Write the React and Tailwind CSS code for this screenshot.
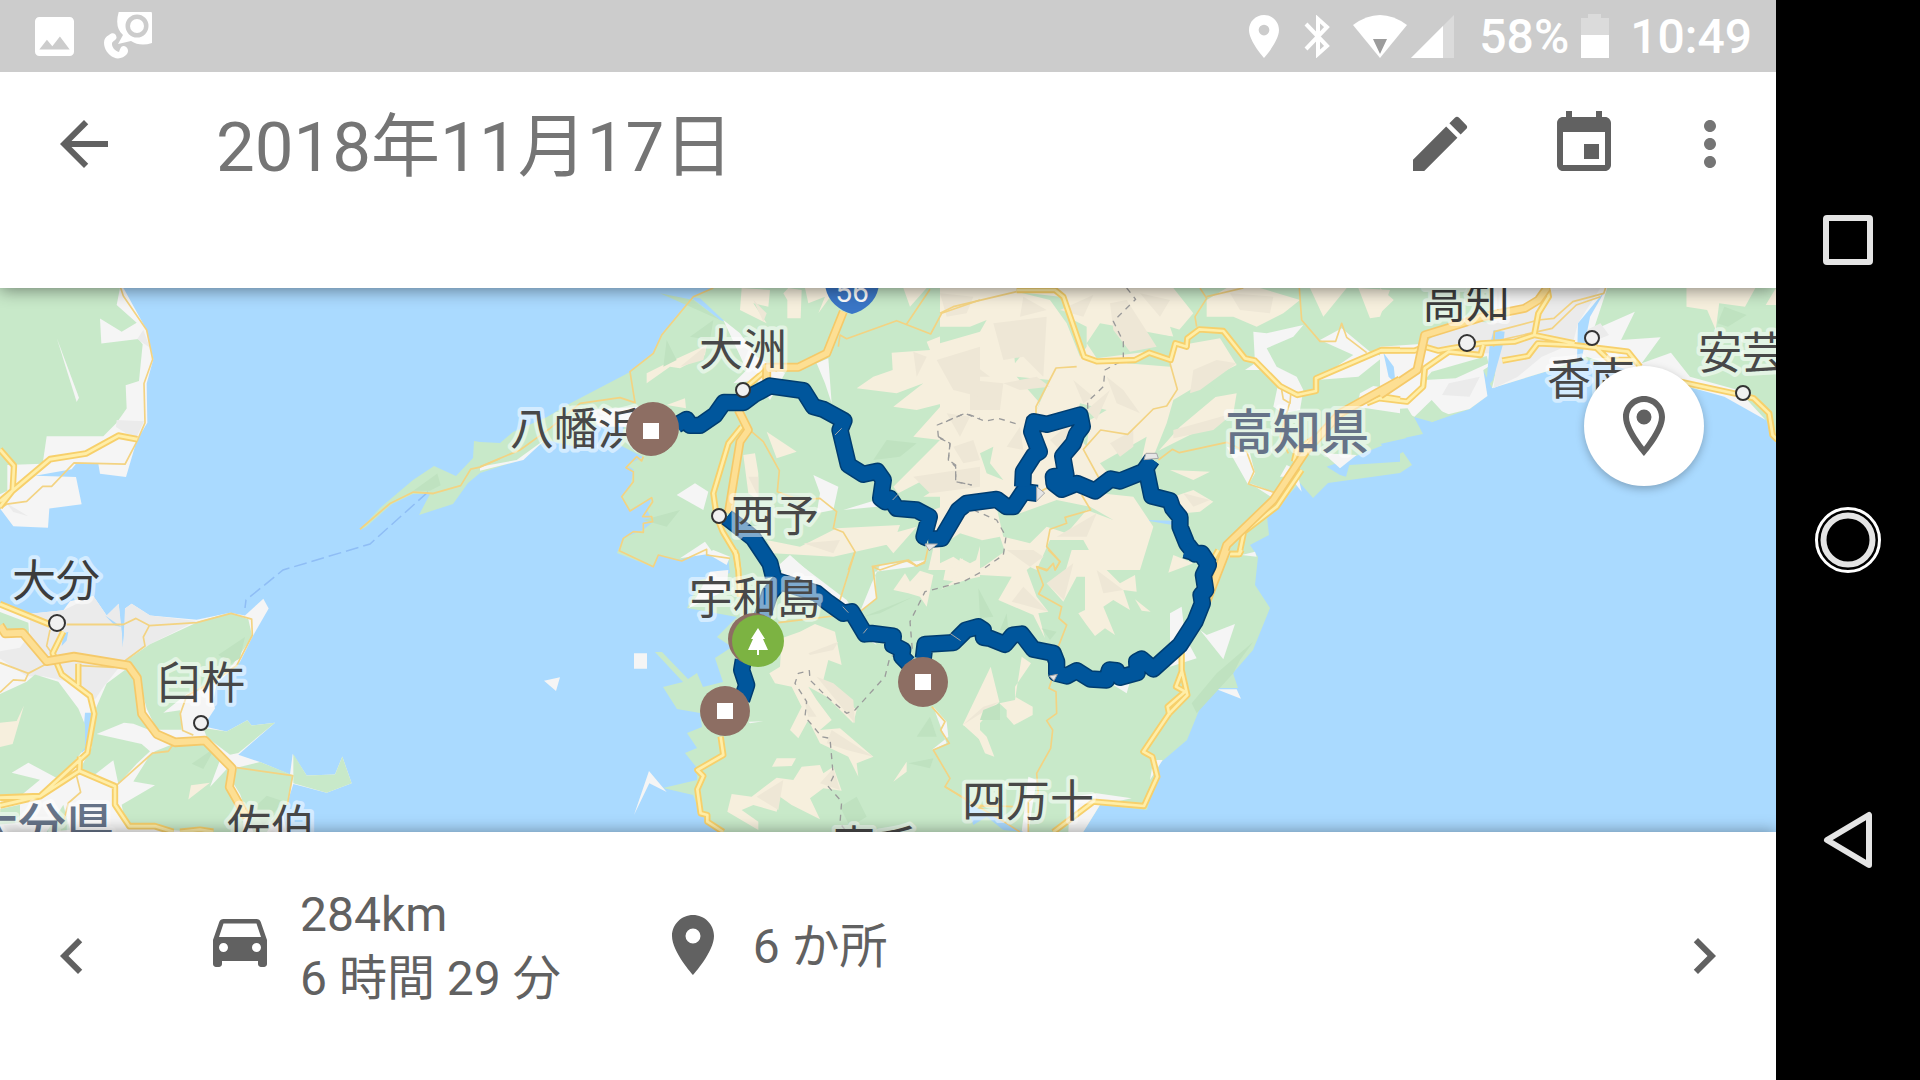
import React from "react";

/* Each map tile has its own local units; paths below are listed per tile. */
const TILES = {
  west: "translate(0 280) scale(.33333 .357)",
  north: "translate(480 280) scale(.33333)",
  south: "translate(480 550) scale(.33333)",
  centre: "translate(940 280) scale(.33333)",
  cape: "translate(940 550) scale(.33333)",
  east: "translate(1380 280) scale(.34436 .33333)",
};

const SHIKOKU =
  "M713 288L693 297L662 335L653 353L630 372L567 405L547 417L513 432L500 443L480 442L474 441L473 458L456 476L434 466L413 480L380 508L360 530L366 527L392 504L413 494L430 494L419 515L453 504L468 483L480 473L517 461L547 440L572 446L610 440L643 457L627 465L634 470L630 487L622 497L630 510L652 498L647 510L653 522L643 530L623 538L617 553L653 567L658 555L680 560L707 550L728 557L730 573L700 580L687 608L737 617L717 637L732 647L715 658L723 682L703 687L697 673L688 679L662 652L655 652L683 682L663 687L677 709L700 713L702 727L687 733L697 748L685 753L697 768L697 780L663 788L693 795L700 813L723 832L1083 832L1100 805L1147 810L1160 763L1187 740L1202 703L1217 688L1238 688L1233 673L1253 650L1270 608L1255 585L1258 557L1250 545L1269 535L1267 517L1300 483L1313 498L1328 483L1400 473L1412 465L1403 452L1392 458L1380 443L1423 434L1414 417L1432 422L1470 409L1487 396L1483 370L1492 388L1545 372L1600 362L1638 370L1686 387L1742 399L1766 420L1776 440V288Z";

const LAND = [
  ["west", "#f5f5f5", "M0 22H370L440 140L460 222L440 290L442 400L410 450L378 552L300 543L295 515H228L215 530L105 548L228 552L245 628L148 640L144 694L40 690L0 640Z"],
  ["west", "#f5f5f5", "M0 905L90 935L190 925L210 900L280 885L320 940L356 907L362 970L368 1030L375 970V920L395 907L450 940L590 952L690 932L735 940L790 893L806 920L757 1000L720 1070L650 1130L640 1180L645 1200L610 1250L680 1265L742 1233L755 1248L825 1240L715 1330L780 1350L870 1385L878 1328L920 1388L1005 1385L1027 1335L1055 1410L980 1436L880 1412L850 1500L860 1546H0Z"],
  ["west", "#c8e9c9", "M0 22H360L350 70L410 120L365 145L300 108L304 178L415 165L428 180L417 283L377 295L380 360L350 400L310 438H140L128 515L22 518V590L0 600Z"],
  ["west", "#ebebeb", "M350 392L432 396L410 440L380 430L348 412ZM412 165L430 140L450 190ZM90 935L190 925L280 885L320 940L356 907L370 1020L375 920L395 907L450 940L590 955L450 1020L370 1070L310 1140L285 1175L230 1130L130 1110L80 1110L0 1060V1040L60 1030L90 990ZM20 625L85 662L40 650Z"],
  ["west", "#aadaff", "M315 940L365 972L345 968ZM365 970H372L368 1030ZM190 990L205 985L200 1010L185 1025ZM255 1212H275L262 1310L245 1325Z"],
  ["west", "#c8e9c9", "M375 1068L450 1020L600 955L690 932L745 950L757 1000L700 1075L650 1125L560 1160L490 1212L540 1205L545 1260L470 1260L440 1200L410 1100ZM0 930L85 960L88 1000L0 985ZM105 1105L175 1125L235 1200L255 1245V1310L180 1400L85 1352L35 1380L120 1400L60 1446L0 1443V1160L80 1125ZM390 1082L420 1110L430 1220L475 1270L400 1243L372 1240L290 1272L425 1300L450 1320L410 1355L355 1412L340 1345L285 1385L240 1370L275 1310L285 1205L320 1130ZM465 1320L520 1300L610 1300L660 1345L630 1420L690 1360V1430L730 1500V1546H600L500 1540L375 1520L365 1470L465 1415L400 1405L450 1330ZM610 1255L680 1265L742 1233L755 1248L825 1240L715 1325L690 1330L620 1280ZM710 1366L780 1350L880 1388L862 1470L800 1546H760L720 1440L700 1410ZM880 1328L920 1388L1005 1385L1027 1335L1055 1410L980 1436L880 1410ZM140 1546L190 1470L210 1540ZM0 1482L60 1470V1520L0 1525Z"],
  ["west", "#bfe2c0", "M655 1050L735 1000L720 1060L690 1075ZM575 1355L645 1310L610 1370ZM760 1480L800 1445L850 1460L790 1530Z"],
  ["west", "#f6efdd", "M0 1240L50 1235L72 1192L38 1300L0 1308ZM573 1415L630 1408L565 1455Z"],
  ["west", "#f5f5f5", "M170 162L237 330L230 342Z"],
  ["west", "#bfe2c0", "M1240 590L1312 542L1322 575L1290 590Z"],
  ["south", "#f5f5f5", "M192 392L240 382L228 423ZM462 310H501V356H462ZM462 795L507 663L560 726L508 700Z"],
  ["north", "#aadaff", "M630 50L660 55L735 125L720 120ZM300 500L370 410L440 400L420 500Z"],
  ["centre", "#aadaff", "M1160 560L1200 585L1218 590L1228 555L1380 545V480L1325 497L1250 527ZM610 720L700 722L715 738ZM1335 220L1380 250V300L1355 270Z"],
  ["east", "#f5f5f5", "M330 24H660L620 150L740 95L700 180L815 172L760 250L845 218L900 290L1040 330L1120 420L1000 350L720 270L600 230L480 275L325 325L345 240L300 270L312 348L260 387L190 405L150 360L100 410L0 360V200L150 190L320 180Z"],
  ["east", "#ebebeb", "M130 190L210 120L350 130L500 30L640 24L575 130L560 190L470 230L400 290L330 325L340 220L180 220ZM600 150L640 130L665 165L630 180ZM200 310L290 290L260 350L180 345Z"],
  ["east", "#c8e9c9", "M150 275L310 228L315 250L220 295L130 300ZM0 390L80 385L95 410L75 475L0 492ZM135 375L205 405L150 427Z"],
  ["east", "#aadaff", "M10 218L40 260L45 310L25 290ZM330 150L362 155L358 190L328 300L308 325L318 200ZM575 130L655 30L610 110L585 240H572ZM590 240L650 245L640 270L500 280Z"],
  ["cape", "#f5f5f5", "M905 15L945 5L950 20ZM830 418H890L903 446ZM690 190L725 170L735 260L770 325L690 350ZM780 240L800 255L885 222L850 328ZM390 740L470 730L575 745L480 765L430 846H385ZM265 680L290 690L265 846H245ZM640 630H668L630 690ZM520 405L570 395L560 430Z"],
  ["cape", "#aadaff", "M75 755L220 830L250 846L190 840L140 800L100 825Z"],
  ["centre", "#f5f5f5", "M940 155L980 160L1090 135L1060 170L980 205L1010 260L1070 290L1090 330L1080 390L1030 400L1000 380L1015 310L960 270L915 270L945 250ZM1140 180L1205 145L1290 215L1330 230L1255 290L1130 300L1240 225ZM1260 340L1300 318L1380 330V400L1250 380ZM1150 520L1250 525L1200 565ZM860 500L930 520L945 580L925 615ZM930 610L1010 640L1000 655ZM1070 570L1085 635L1050 590L1020 590L1040 555Z"],
  ["north", "#f5f5f5", "M730 120L780 160L830 230L915 280L870 360L830 300L760 310L800 270ZM1010 250L1045 235L1055 370L1035 310ZM590 645L645 610L685 635L670 690ZM1000 585L1075 620L1060 690L1010 700L1020 640ZM1090 690L1220 650L1190 680ZM320 390L480 380L440 440L360 440ZM0 560L110 540L200 475L130 540L0 572ZM600 835L675 785L700 820ZM880 870L930 825L980 870Z"],
  ["south", "#f5f5f5", "M890 90L930 20L1100 150L1190 285L1150 260L1060 170ZM625 175L740 120L745 60L690 65L650 140ZM1140 185L1175 100L1200 45L1340 30L1300 50L1185 65L1190 145ZM1360 470L1400 515L1405 560L1355 600L1400 580ZM805 515L850 514L810 520ZM700 0L750 20L740 45L680 10Z"],
];

const TERRAIN = [
  ["north", "#f6efdd", "M785 24L870 30L865 80L820 70L860 130L780 90ZM925 24L965 30L962 115H922V60L910 40ZM975 24H1070L1015 100L1035 50L985 70ZM1270 24H1340L1290 80ZM500 280L560 250L680 195L675 225L600 265L570 260L500 310ZM560 375L615 355L618 385ZM790 525L825 520L835 580V660L805 640ZM860 455L950 515L890 535ZM1500 60L1400 100L1480 130L1340 185L1350 210L1235 218L1238 270L1180 290L1130 325L1250 340L1330 310L1240 380L1310 390L1390 370L1300 470L1380 480L1300 560L1240 620L1255 640L1350 590L1410 600L1330 650L1500 650V870L1390 800L1380 870H1345L1370 760L1330 700L1500 640ZM860 780L960 800L1070 745L1260 735L1240 790L1060 830L880 820ZM1200 770L1310 740L1240 820Z"],
  ["centre", "#f6efdd", "M0 24H700L760 100L700 170L620 160L640 210L840 175L890 255L800 300L720 370L890 340L880 400L700 490L620 530L600 580L480 640L580 650L640 740L600 870H480L430 780L330 780L290 870L200 830L180 770L80 790L60 870H0ZM800 60L860 24H960L1080 60L1030 100L950 140L880 110L800 110ZM1110 24H1220L1150 110ZM1255 24L1350 30L1320 110L1290 115ZM690 570L810 575L760 600ZM700 650L760 630L820 665L780 695L730 700Z"],
  ["centre", "#c8e9c9", "M230 35L360 50L400 120L440 140V200L420 230L380 130L330 60ZM0 140L90 140L140 120L120 155L0 190ZM220 200L290 150L240 230L225 250ZM480 130L620 155L700 170L690 140L770 165L700 190L690 260L560 250L620 215L470 235L440 190ZM420 370L500 390L450 420L440 500L400 450ZM120 520L160 500L150 550L190 600L140 580ZM330 300L230 290L300 370L285 400ZM160 640L240 700L350 660L450 680L520 720L440 690L380 760L320 740L270 790L190 770ZM0 800L60 760L125 780L100 870L40 830L0 850ZM700 360L800 300L840 340L720 440L640 530L680 430ZM480 550L620 470L600 560L520 600Z"],
  ["centre", "#eee7d6", "M160 130L320 110L310 290L250 230L190 240ZM510 70L560 60L650 200L570 215L520 150ZM760 270L830 240L890 250L780 330L750 340ZM700 450L880 400L820 450L700 475ZM90 300L190 310L180 390L90 390ZM360 90L460 45L430 110ZM510 490L580 450V500L540 530ZM350 770L470 700L440 770ZM400 300L460 350L430 370ZM0 40L100 50L80 100L20 110ZM870 40L1000 50L990 100L900 90ZM730 640L810 660L760 680ZM190 310L290 290L330 320L240 330ZM70 230L150 290L50 290ZM440 390L510 330L470 420ZM500 290L550 330L600 400L530 370ZM250 50L320 90L240 110ZM330 480L390 430L370 520ZM200 500L240 440L250 510ZM600 40L690 60L660 110Z"],
  ["north", "#eee7d6", "M600 260L680 195L670 240ZM820 60L860 100L850 125ZM1370 240L1500 200V350L1420 330ZM1300 590L1500 560V620L1350 640ZM970 790L1080 780L1060 820ZM1400 400L1470 410L1440 470ZM805 590L835 590V650ZM1300 215L1340 230L1310 290ZM1420 500L1480 480L1500 540L1450 550Z"],
  ["north", "#bfe2c0", "M550 260L560 180L590 240ZM540 40L640 60L720 120ZM1070 24L1150 60L1120 90L1050 60ZM1180 540L1220 480L1310 490L1260 530ZM490 720L600 690L560 740ZM910 640L990 650L960 720ZM630 170L700 120L690 180Z"],
  ["south", "#f6efdd", "M905 265L960 245L1005 222L1065 245L1085 345L1045 330L1030 390L1130 480L1120 520L1040 440L985 410L1010 450L1055 510L1020 540L1080 535L1180 620L1130 640L1135 680L1105 620L1020 580L985 510L955 565L930 540L965 470L935 410L885 400L868 370L900 350ZM890 625H948L935 648L876 650ZM940 690L965 650L1020 645L1030 670L1060 650L1085 722L1030 715L990 745L1020 808L935 765L900 740L890 785L820 765L785 780L835 815V840L742 785L755 732L815 740L890 683ZM1240 695L1280 635V665ZM1240 120L1275 70L1290 95L1320 62L1360 75L1340 170L1320 140L1285 130ZM1390 90L1400 40L1430 60L1440 24L1470 40L1500 24V80L1430 95ZM1450 525L1500 440V570Z"],
  ["south", "#eee7d6", "M985 310L1075 275L1060 300L990 315ZM1010 380L1060 400L1120 450L1125 520ZM1055 540L1180 620L1100 600L1040 580ZM830 740L910 690L895 780ZM1020 700L1060 655L1080 720ZM960 770L1015 800ZM970 440L1010 500H985Z"],
  ["south", "#bfe2c0", "M1350 500L1370 560L1310 560ZM1285 640L1360 625L1350 655ZM1080 770L1130 740L1160 800L1110 830ZM1150 200L1300 140L1200 190Z"],
  ["cape", "#f6efdd", "M0 120L60 80L130 50L200 0H300L310 20L260 60L290 140L325 185L295 190L315 265L280 195L175 150L215 80L120 75L20 110ZM320 100L370 85L395 0H460L500 60L540 100L585 75L590 125L550 120L570 180L520 150L490 170L525 255L495 235L465 258L440 225L415 190L435 180V80L410 80L370 155ZM685 68L700 15L760 40ZM15 90L20 40L40 60L68 25L75 75ZM245 320L273 340L225 410V440L278 470V495L222 525L200 500V480L178 460L225 450ZM152 350L178 455L110 530L140 560L163 620L135 610L105 540L68 525ZM585 148L632 185L605 182Z"],
  ["cape", "#eee7d6", "M200 0H280L310 20L270 50ZM250 110L325 185L215 155ZM320 100L400 40L372 150ZM470 60L550 120L490 130ZM178 455L68 525L130 470Z"],
  ["cape", "#bfe2c0", "M115 115L160 200L120 205ZM755 460L830 370L940 275L900 330L880 370L770 490ZM180 240L200 190L205 240ZM305 235L350 245L330 270ZM130 480L180 460V510L120 510Z"],
  ["east", "#f6efdd", "M890 24H1090L1060 80L985 70L975 150L950 90L890 80ZM1120 75L1150 24V75ZM0 24L40 60L0 100Z"],
  ["east", "#bfe2c0", "M1000 80L1065 105L1010 140L980 130Z"],
];

const THIN_ROADS = [
  ["west", "M362 22L370 45L440 140L458 222L432 290L435 400L412 450L375 516L222 512L155 578H128L80 620L20 628L0 640M200 965H370L408 948L448 968L590 960L693 934L755 950L757 995L710 1080L640 1125L560 1165L541 1215L548 1262L580 1275M448 968L430 1000L435 1025L370 1070M0 1072L85 1102L75 1122L40 1120L0 1155M150 980L140 1025L155 1045M140 1075L85 1102M240 1080L340 1085L370 1072M350 1415L458 1325L505 1320L520 1300M710 1366L878 1388L862 1470M230 1390L242 1435L205 1465L190 1520M1080 698L1170 626L1240 594L1300 598L1382 576L1412 530L1440 524L1500 500"],
  ["north", "M0 560L120 510L210 445L300 370L420 353L465 368L450 275L520 220L545 165L640 50L700 24M490 530L485 543L470 530L438 563L460 575V605L425 650L450 693L515 653L518 665L488 710H515L518 725L490 730V757L460 755L430 775L418 812L520 860L535 825L605 843L680 808V825L750 835M1075 200L1080 165L1100 176L1250 122L1352 162L1385 100L1500 60M1350 28L1278 135M815 455L850 485L898 572L892 635L960 660L1020 655L1070 695L1060 745L1090 757L1125 815L1105 870M1175 860L1285 840L1310 858L1335 845L1345 800"],
  ["south", "M895 218L1060 198L1140 185L1190 145L1178 50L1200 60L1280 32L1310 48L1335 38M1125 5L1080 150M1355 470L1395 515L1382 540L1408 580L1360 600L1410 685L1395 710L1500 775"],
  ["centre", "M0 100L40 80L230 35M410 260L348 264L288 380V410M690 250L712 328L680 378L640 387L563 463L482 450L430 508L480 600M290 640L320 625L350 625M425 645L452 690L375 712L380 730L330 748L320 800L360 845L345 870M655 540L697 508L718 518L860 487L920 515L942 575L925 612L1005 638M770 140L765 110L800 55L780 24M800 50L910 24M1078 24L1085 120L1140 184H1187L1205 130L1220 172L1280 218M1025 330L1030 358L1050 370L1052 345M1048 372L1020 470L1045 520M290 860L325 870"],
  ["cape", "M325 0L360 35L345 60L340 40L320 62L290 50L310 105L296 132L365 170L357 205L380 225L355 290M335 390L327 415L348 425L350 490L320 512L338 540L332 595L290 670L295 730L265 755V846M15 710L200 820L240 846M100 765L220 770"],
  ["east", "M330 200L332 155L460 120L505 115L560 65L650 40L655 24M350 180L500 145L570 75L640 50"],
];

const MAIN_ROADS = [
  ["west", "M0 475L42 520L38 590L0 635M0 620L150 502L258 486L355 436L412 446M0 908L150 965M190 985L158 1045L185 1105L270 1165L283 1215L262 1325L120 1446L0 1472M235 1075V1135M0 1450L120 1446L238 1375L240 1335M238 1375L345 1418V1470L388 1530H465L520 1546M540 1546L600 1540L640 1546"],
  ["north", "M870 260L800 320L785 350M785 440L745 490L700 640L710 710L728 755L770 825L775 870"],
  ["south", "M765 0L775 60L780 140M722 560L730 615L652 660L670 678L652 718L662 790L682 795V815L730 846"],
  ["centre", "M230 30H345L370 50L432 230L470 244L585 240L628 218L692 240L706 190L740 200L742 175L778 148L850 153L915 235L945 242L1020 318L1072 345L1128 333V295L1325 210H1380M870 822H898L912 755L1010 680L1085 570M1062 545L1070 510L1130 470M1280 370L1330 350L1380 358"],
  ["cape", "M870 12H898L905 0M725 290V360L742 435L688 490L610 605L637 620L652 680L612 768L460 755L340 846M725 365L708 410L735 425L683 470L688 495M835 0L810 45"],
  ["east", "M0 212H100L130 200L170 212L205 205L295 190L390 185L448 165L565 190M0 355L78 365L125 320L130 265L200 215L292 225L300 195M448 165L460 100L490 50L485 24M355 242L430 228L458 190L560 195L720 215L755 260M620 195L665 240H740M870 305L1050 345L1085 355L1130 400L1140 465L1155 480"],
];

const HIGHWAYS = [
  ["west", "M0 968L15 990L68 988L140 1068L222 1055L385 1080L412 1115L425 1215L470 1272L525 1295L615 1290L697 1368L688 1420L740 1505"],
  ["north", "M1090 95L1040 220L955 262H860V310M775 390L805 450L780 485L745 700"],
  ["centre", "M835 870L860 795L1000 660L1100 510L1200 400L1380 300"],
  ["cape", "M860 0L790 180"],
  ["east", "M0 345L108 270L130 165L240 130L300 110L420 85L460 60L485 24"],
];

const BORDERS = [
  ["centre", "M560 24L587 58L520 124L550 185V240L495 270L490 320L443 365V395M18 425L75 400L135 424L175 415L235 433M0 475L30 490L25 540L47 560V605L95 615M100 690L170 720L198 770L190 825L125 870"],
  ["north", "M1375 470L1372 435L1455 400L1500 415M1375 470L1410 490L1405 540L1427 555V605L1475 615"],
  ["south", "M1500 68L1450 95L1335 125L1290 215L1297 300L1230 320L1215 380L1125 480L1100 490L1040 440L990 390L988 362L955 370L945 400L980 455L975 500L1025 560L1050 565L1060 680L1045 710L1085 755L1080 820L1100 846"],
];

const ROUTE = [
  ["north", "M590 435L620 418L630 436L660 436L705 405L732 367L790 368L820 345L870 318L970 332L1000 380L1030 388L1092 422L1080 450L1105 555L1150 583L1192 574L1210 600L1202 655L1215 665L1230 655L1250 685L1310 690L1348 710L1332 770L1345 775M1345 778L1385 775L1435 690L1460 670L1550 658L1580 680L1600 680L1630 635L1672 640"],
  ["centre", "M248 620L250 575L282 525L298 515L275 455L282 425L320 433L420 405L427 440L410 462L400 490L368 528L378 585L340 590L342 610L365 628L410 610L465 633L512 597L540 603L610 575L636 538M620 575L635 648L690 662L698 685L720 712L720 740L740 790L765 822L785 820L808 855"],
  ["cape", "M735 0L785 15L805 45L790 75L797 120L783 135L787 160L765 215L720 285L640 357L605 327L590 335L592 368L540 382L530 362L508 360L500 390L450 387L410 362L380 378L350 370V335L340 310L280 298L245 252L218 255L195 283L150 265L130 262L130 240L115 230L78 240L40 278L-45 283L-50 325"],
  ["south", "M1285 340L1265 320L1268 300L1238 285L1240 258L1175 250L1155 252L1115 185L1090 190L1045 158L1010 130L900 95L870 130L850 190L830 230M790 330L785 360L800 405L785 450"],
  ["north", "M740 712L770 735L820 775L870 850L880 890"],
];

const LABELS = [
  ["大分", 56, 597, "#3c3c3c"],
  ["臼杵", 201, 699, "#484848"],
  ["佐伯", 271, 842, "#484848"],
  ["大洲", 743, 366, "#484848"],
  ["八幡浜", 576, 445, "#484848"],
  ["西予", 775, 532, "#484848"],
  ["宇和島", 755, 614, "#484848"],
  ["四万十", 1028, 817, "#484848"],
  ["高知", 1466, 318, "#3c3c3c"],
  ["香南", 1591, 395, "#484848"],
  ["安芸", 1742, 369, "#484848"],
  ["宿毛", 876, 863, "#484848"],
];

const PREFECTURES = [
  ["高知県", 1297, 449],
  ["大分県", 42, 843],
];

const TOWNS = [[57, 623, 9], [201, 723, 8], [743, 390, 8], [719, 516, 8], [1467, 343, 9], [1592, 338, 8], [1743, 393, 8]];

const JOINTS = [
  ["north", "M1065 465L1085 445M1238 660L1255 642M1335 792H1372L1348 812Z"],
  ["centre", "M290 620L314 639L290 663ZM612 539L618 520H650L655 535Z"],
  ["cape", "M30 250L62 272M328 378L352 373L342 392Z"],
  ["south", "M1088 170L1105 188M1150 250L1162 235"],
];

function Strokes({ items, color, width, ...rest }) {
  return items.map(([tile, d], i) => (
    <path key={i} transform={TILES[tile]} d={d} fill="none" stroke={color} strokeWidth={width} strokeLinejoin="round" {...rest} />
  ));
}

function Fills({ items }) {
  return items.map(([tile, fill, d], i) => <path key={i} transform={TILES[tile]} d={d} fill={fill} />);
}

function StopMarker({ x, y }) {
  return (
    <g>
      <circle cx={x} cy={y} r="25" fill="#8d6e63" />
      <rect x={x - 8} y={y - 8} width="16" height="16" fill="#fff" />
    </g>
  );
}

function RouteMap() {
  return (
    <svg className="absolute inset-0 h-full w-full" viewBox="0 288 1776 544" preserveAspectRatio="xMidYMid slice" role="img" aria-label="2018年11月17日のルート">
      <rect x="-400" y="0" width="2600" height="1200" fill="#aadaff" />
      <path d={SHIKOKU} fill="#c8e9c9" />
      <Fills items={LAND} />
      <Fills items={TERRAIN} />
      <Strokes items={BORDERS} color="#9b9b9b" width="4" strokeDasharray="18 16" />
      <path d="M428 492L370 544L283 570L246 600L245 608" fill="none" stroke="#8fbdf5" strokeWidth="1.500" strokeDasharray="13 5" />
      <Strokes items={THIN_ROADS} color="#f3d382" width="5" />
      <Strokes items={MAIN_ROADS} color="#f7d06b" width="19" />
      <Strokes items={MAIN_ROADS} color="#ffeea8" width="8" />
      <Strokes items={HIGHWAYS} color="#f5c969" width="27" />
      <Strokes items={HIGHWAYS} color="#fddf93" width="17" />
      <Strokes items={ROUTE} color="#003d70" width="52" />
      <Strokes items={ROUTE} color="#00569c" width="43" />
      <Strokes items={JOINTS} color="#a5a5a5" width="3" style={{ fill: "#e6e6e6" }} />
      <path d="M825 280H879C880 298 867 310 852 314C837 310 824 298 825 280Z" fill="#3a76c6" />
      <text x="852" y="302" textAnchor="middle" fill="#fff" className="font-['Roboto',sans-serif] text-[30px]">56</text>
      {TOWNS.map(([x, y, r]) => (
        <circle key={x} cx={x} cy={y} r={r - 1} fill="#f1f1f1" stroke="#333" strokeWidth="2" />
      ))}
      <g textAnchor="middle" stroke="#fff" strokeOpacity=".5" strokeWidth="8" strokeLinejoin="round" paintOrder="stroke" className="font-['Noto_Sans_CJK_JP',sans-serif]">
        {LABELS.map(([name, x, y, fill]) => (
          <text key={name} x={x} y={y} fill={fill} className="text-[44px]">{name}</text>
        ))}
        {PREFECTURES.map(([name, x, y]) => (
          <text key={name} x={x} y={y} fill="#667388" className="text-[48px] font-medium">{name}</text>
        ))}
      </g>
      <circle cx="653" cy="428" r="26" fill="#8d6e63" />
      <StopMarker x={651} y={431} />
      <StopMarker x={725} y={711} />
      <StopMarker x={923} y={682} />
      <circle cx="754" cy="639" r="26" fill="#8d6e63" />
      <circle cx="758" cy="641" r="26" fill="#7cb342" />
      <path d="M758 628L765 639H763L768 650H759V655H757V650H748L753 639H751Z" fill="#fff" />
    </svg>
  );
}

function Icon({ d, className = "" }) {
  return (
    <svg viewBox="0 0 24 24" className={`size-[72px] shrink-0 fill-current ${className}`} aria-hidden="true">
      <path d={d} />
    </svg>
  );
}

const ICONS = {
  back: "M20 11H7.83l5.59-5.59L12 4l-8 8 8 8 1.41-1.41L7.83 13H20v-2z",
  edit: "M3 17.25V21h3.75L17.81 9.94l-3.75-3.75L3 17.25zM20.71 7.04a1 1 0 0 0 0-1.41l-2.34-2.34a1 1 0 0 0-1.41 0l-1.83 1.83 3.75 3.75 1.83-1.83z",
  event: "M17 12h-5v5h5v-5zM16 1v2H8V1H6v2H5c-1.11 0-1.99.9-1.99 2L3 19c0 1.1.89 2 2 2h14c1.1 0 2-.9 2-2V5c0-1.1-.9-2-2-2h-1V1h-2zm3 18H5V8h14v11z",
  more: "M12 8c1.1 0 2-.9 2-2s-.9-2-2-2-2 .9-2 2 .9 2 2 2zm0 2c-1.1 0-2 .9-2 2s.9 2 2 2 2-.9 2-2-.9-2-2-2zm0 6c-1.1 0-2 .9-2 2s.9 2 2 2 2-.9 2-2-.9-2-2-2z",
  prev: "M15.41 7.41L14 6l-6 6 6 6 1.41-1.41L10.83 12z",
  next: "M10 6L8.59 7.41 13.17 12l-4.58 4.59L10 18l6-6z",
  car: "M18.92 6.01C18.72 5.42 18.16 5 17.5 5h-11c-.66 0-1.21.42-1.42 1.01L3 12v8c0 .55.45 1 1 1h1c.55 0 1-.45 1-1v-1h12v1c0 .55.45 1 1 1h1c.55 0 1-.45 1-1v-8l-2.08-5.99zM6.5 16c-.83 0-1.5-.67-1.5-1.5S5.67 13 6.5 13s1.5.67 1.5 1.5S7.33 16 6.5 16zm11 0c-.83 0-1.5-.67-1.5-1.5s.67-1.5 1.5-1.5 1.5.67 1.5 1.5-.67 1.5-1.5 1.5zM5 11l1.5-4.5h11L19 11H5z",
  place: "M12 2C8.13 2 5 5.13 5 9c0 5.25 7 13 7 13s7-7.75 7-13c0-3.87-3.13-7-7-7zm0 9.5a2.5 2.5 0 0 1 0-5 2.5 2.5 0 0 1 0 5z",
  placeOutline: "M12 2C8.13 2 5 5.13 5 9c0 5.25 7 13 7 13s7-7.75 7-13c0-3.87-3.13-7-7-7zM7 9c0-2.76 2.24-5 5-5s5 2.24 5 5c0 2.88-2.88 7.19-5 9.88C9.92 16.21 7 11.85 7 9zM12 6.5a2.5 2.5 0 1 0 0 5 2.5 2.5 0 0 0 0-5z",
};

function StatusBar() {
  return (
    <div className="relative z-20 flex h-[72px] shrink-0 items-center bg-[#cccccc] pr-[24px] pl-[35px] text-[48px] leading-[72px] font-medium text-white">
      <svg viewBox="3 3 18 18" className="size-[39px] fill-white" aria-label="画像">
        <path d="M21 19V5c0-1.1-.9-2-2-2H5c-1.1 0-2 .9-2 2v14c0 1.1.9 2 2 2h14c1.1 0 2-.9 2-2zM8.500 13.500l2.500 3.010L14.500 12l4.500 6H5l3.500-4.500z" />
      </svg>
      <svg viewBox="0 1 48 48" className="ml-[30px] size-[48px] fill-white" aria-label="通話">
        <path fillRule="evenodd" d="M15 0H45Q48 0 48 3V32Q36 36 27 30L14 33L19 24Q10 16 15 0ZM33 3.500A11.500 11.500 0 1 0 33 26.500A11.500 11.500 0 1 0 33 3.500Z" />
        <circle cx="33" cy="15" r="7" />
        <path d="M5 24C8 21 12 22 12.500 26C13 29 9 29.500 8 32C7.500 36 11 40 15 41C16 38 17 34.500 20 35C24 36 25 40 23 43C20 47 14 48.500 10 46.500C4 44 0 38 0 31.500C0 28 2 25.500 5 24Z" />
      </svg>
      <div className="ml-auto flex items-center">
        <svg viewBox="5 2 14 20" className="h-[43px] w-[30px] fill-white" aria-label="位置情報"><path d={ICONS.place} /></svg>
        <svg viewBox="0 0 26 43" className="ml-[25px] h-[43px] w-[26px] fill-none stroke-white stroke-[4]" aria-label="Bluetooth">
          <path d="M2 9L23 31L14 39V4L23 12L2 34" />
        </svg>
        <svg viewBox="0 0 54 43" className="ml-[23px] h-[43px] w-[54px]" aria-label="Wi-Fi">
          <path d="M0 10Q27 -10 54 10L27 43Z" fill="#fff" />
          <path d="M20 24H34L27 39Z" fill="#9c9c9c" />
        </svg>
        <svg viewBox="0 0 43 43" className="ml-[4px] size-[43px]" aria-label="電波">
          <path d="M0 43H43V0Z" fill="#dbdbdb" />
          <path d="M0 43H32V11Z" fill="#fff" />
        </svg>
        <span className="ml-[25px] pt-[2px]">58%</span>
        <svg viewBox="0 0 28 44" className="ml-[12px] h-[44px] w-[28px]" aria-label="バッテリー">
          <path d="M7 0H20V4H28V21H0V4H7Z" fill="#dbdbdb" />
          <path d="M0 21H28V44H0Z" fill="#fff" />
        </svg>
        <span className="ml-[21px] pt-[2px]">10:49</span>
      </div>
    </div>
  );
}

function SystemNav() {
  return (
    <nav className="flex w-[144px] shrink-0 flex-col items-center justify-around bg-black py-[90px]">
      <button aria-label="最近使ったアプリ">
        <svg viewBox="0 0 72 72" className="size-[72px] fill-none stroke-[#e4e4e4] stroke-[6]">
          <rect x="14" y="14" width="44" height="44" rx="1" strokeLinejoin="round" />
        </svg>
      </button>
      <button aria-label="ホーム">
        <svg viewBox="0 0 72 72" className="size-[72px] fill-none">
          <circle cx="36" cy="36" r="31.500" stroke="#fff" strokeWidth="3" />
          <circle cx="36" cy="36" r="24.500" stroke="#e4e4e4" strokeWidth="6" />
        </svg>
      </button>
      <button aria-label="戻る">
        <svg viewBox="0 0 72 72" className="size-[72px] fill-none stroke-[#e4e4e4] stroke-[6]">
          <path d="M15 36L57 11V61Z" strokeLinejoin="round" />
        </svg>
      </button>
    </nav>
  );
}

export default function App() {
  return (
    <div className="flex h-screen bg-white font-['Roboto','Noto_Sans_CJK_JP',sans-serif]" lang="ja">
      <div className="flex min-w-0 flex-1 flex-col">
        <StatusBar />
        <header className="relative z-10 flex h-[216px] shrink-0 items-start bg-white pt-[36px] pr-[30px] pl-[48px] text-[#616161] shadow-[0_2px_16px_rgba(0,0,0,0.45)]">
          <button aria-label="戻る"><Icon d={ICONS.back} /></button>
          <h1 className="ml-[96px] text-[69px] leading-[80px] text-[#757575]">2018年11月17日</h1>
          <button className="ml-auto" aria-label="編集"><Icon d={ICONS.edit} /></button>
          <button className="ml-[72px]" aria-label="カレンダー"><Icon d={ICONS.event} /></button>
          <button className="ml-[54px] text-[#757575]" aria-label="その他"><Icon d={ICONS.more} /></button>
        </header>
        <main className="relative min-h-0 flex-1 overflow-hidden">
          <RouteMap />
          <button aria-label="場所" className="absolute top-[78px] right-[72px] flex size-[120px] items-center justify-center rounded-full bg-white text-[#616161] shadow-[0_3px_8px_rgba(0,0,0,0.25)]">
            <Icon d={ICONS.placeOutline} />
          </button>
        </main>
        <footer className="relative z-10 flex h-[248px] shrink-0 items-center bg-white px-[36px] text-[48px] leading-[64px] text-[#616161] shadow-[0_-1px_14px_rgba(0,0,0,0.35)]">
          <button aria-label="前の日"><Icon d={ICONS.prev} /></button>
          <div className="ml-[96px] flex items-center gap-[96px] pb-[18px]">
            <div className="flex items-center gap-[24px]">
              <Icon d={ICONS.car} className="mb-[14px]" />
              <p>284km<br />6 時間 29 分</p>
            </div>
            <div className="flex items-center gap-[24px]">
              <Icon d={ICONS.place} className="mb-[4px]" />
              <p>6 か所</p>
            </div>
          </div>
          <button className="ml-auto" aria-label="次の日"><Icon d={ICONS.next} /></button>
        </footer>
      </div>
      <SystemNav />
    </div>
  );
}
